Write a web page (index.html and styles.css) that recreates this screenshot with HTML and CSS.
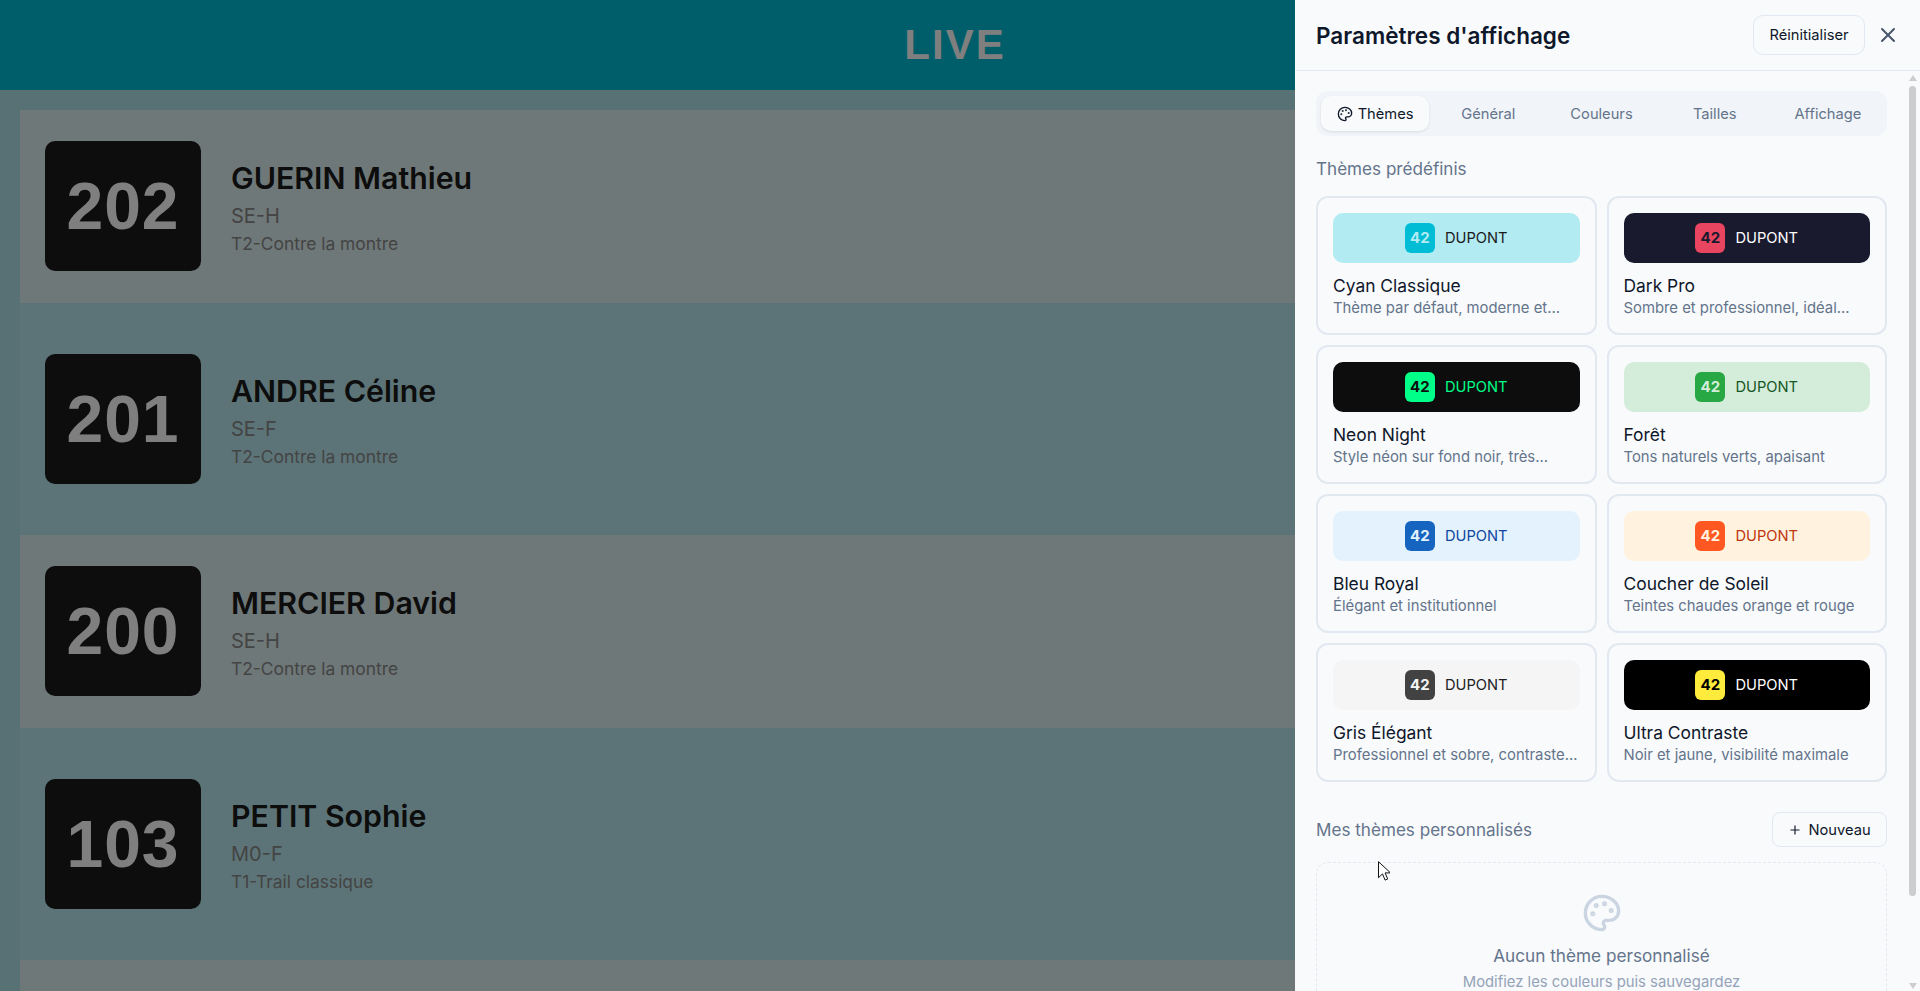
FILE: index.html
```html
<!DOCTYPE html>
<html lang="fr">
<head>
  <meta charset="UTF-8" />
  <meta name="viewport" content="width=device-width, initial-scale=1.0"/>
  <title>Live</title>
  <link rel="stylesheet" href="styles.css">
</head>
<body>

<header class="top-bar">LIVE</header>

<main class="runners">
  <div class="runner">
    <div class="bib">202</div>
    <div class="runner-info">
      <div class="runner-name">GUERIN Mathieu</div>
      <div class="runner-cat">SE-H</div>
      <div class="runner-race">T2-Contre la montre</div>
    </div>
  </div>
  <div class="runner">
    <div class="bib">201</div>
    <div class="runner-info">
      <div class="runner-name">ANDRE Céline</div>
      <div class="runner-cat">SE-F</div>
      <div class="runner-race">T2-Contre la montre</div>
    </div>
  </div>
  <div class="runner">
    <div class="bib">200</div>
    <div class="runner-info">
      <div class="runner-name">MERCIER David</div>
      <div class="runner-cat">SE-H</div>
      <div class="runner-race">T2-Contre la montre</div>
    </div>
  </div>
  <div class="runner">
    <div class="bib">103</div>
    <div class="runner-info">
      <div class="runner-name">PETIT Sophie</div>
      <div class="runner-cat">M0-F</div>
      <div class="runner-race">T1-Trail classique</div>
    </div>
  </div>
  <div class="runner"></div>
</main>

<div class="overlay"></div>

<aside class="panel">
  <div class="panel-header">
    <h2 class="panel-title">Paramètres d'affichage</h2>
    <button class="btn btn-reset" type="button">Réinitialiser</button>
    <svg class="close-icon" viewBox="0 0 24 24" fill="none" stroke="currentColor" stroke-width="2" stroke-linecap="round">
      <path d="M18 6 6 18M6 6l12 12"/>
    </svg>
  </div>

  <div class="panel-main">
    <div class="panel-body">
      <nav class="tabs">
        <div class="tab active">
          <svg class="tab-icon" viewBox="0 0 24 24" fill="none" stroke="currentColor" stroke-width="2" stroke-linecap="round" stroke-linejoin="round">
            <path d="M12 2C6.5 2 2 6.5 2 12s4.5 10 10 10c.926 0 1.648-.746 1.648-1.688 0-.437-.18-.835-.437-1.125-.29-.289-.438-.652-.438-1.125a1.64 1.64 0 0 1 1.668-1.668h1.996c3.051 0 5.555-2.503 5.555-5.554C21.965 6.012 17.461 2 12 2z"/>
            <circle cx="13.5" cy="6.5" r=".5" fill="currentColor"/>
            <circle cx="17.5" cy="10.5" r=".5" fill="currentColor"/>
            <circle cx="8.5" cy="7.5" r=".5" fill="currentColor"/>
            <circle cx="6.5" cy="12.5" r=".5" fill="currentColor"/>
          </svg>
          Thèmes
        </div>
        <div class="tab">Général</div>
        <div class="tab">Couleurs</div>
        <div class="tab">Tailles</div>
        <div class="tab">Affichage</div>
      </nav>

      <h3 class="section-title">Thèmes prédéfinis</h3>

      <div class="theme-grid">
        <div class="theme-card">
          <div class="preview cyan"><span class="preview-num">42</span><span class="preview-name">DUPONT</span></div>
          <div class="theme-name">Cyan Classique</div>
          <div class="theme-desc">Thème par défaut, moderne et...</div>
        </div>
        <div class="theme-card">
          <div class="preview dark"><span class="preview-num">42</span><span class="preview-name">DUPONT</span></div>
          <div class="theme-name">Dark Pro</div>
          <div class="theme-desc">Sombre et professionnel, idéal...</div>
        </div>
        <div class="theme-card">
          <div class="preview neon"><span class="preview-num">42</span><span class="preview-name">DUPONT</span></div>
          <div class="theme-name">Neon Night</div>
          <div class="theme-desc">Style néon sur fond noir, très...</div>
        </div>
        <div class="theme-card">
          <div class="preview forest"><span class="preview-num">42</span><span class="preview-name">DUPONT</span></div>
          <div class="theme-name">Forêt</div>
          <div class="theme-desc">Tons naturels verts, apaisant</div>
        </div>
        <div class="theme-card">
          <div class="preview royal"><span class="preview-num">42</span><span class="preview-name">DUPONT</span></div>
          <div class="theme-name">Bleu Royal</div>
          <div class="theme-desc">Élégant et institutionnel</div>
        </div>
        <div class="theme-card">
          <div class="preview sunset"><span class="preview-num">42</span><span class="preview-name">DUPONT</span></div>
          <div class="theme-name">Coucher de Soleil</div>
          <div class="theme-desc">Teintes chaudes orange et rouge</div>
        </div>
        <div class="theme-card">
          <div class="preview grey"><span class="preview-num">42</span><span class="preview-name">DUPONT</span></div>
          <div class="theme-name">Gris Élégant</div>
          <div class="theme-desc">Professionnel et sobre, contraste...</div>
        </div>
        <div class="theme-card">
          <div class="preview ultra"><span class="preview-num">42</span><span class="preview-name">DUPONT</span></div>
          <div class="theme-name">Ultra Contraste</div>
          <div class="theme-desc">Noir et jaune, visibilité maximale</div>
        </div>
      </div>

      <div class="custom-head">
        <h3 class="section-title custom-title">Mes thèmes personnalisés</h3>
        <button class="btn btn-new" type="button">
          <svg class="plus-icon" viewBox="0 0 24 24" fill="none" stroke="currentColor" stroke-width="2" stroke-linecap="round">
            <path d="M5 12h14M12 5v14"/>
          </svg>
          Nouveau
        </button>
      </div>

      <div class="empty-box">
        <svg class="empty-icon" viewBox="0 0 24 24" fill="none" stroke="currentColor" stroke-width="2" stroke-linecap="round" stroke-linejoin="round">
          <path d="M12 2C6.5 2 2 6.5 2 12s4.5 10 10 10c.926 0 1.648-.746 1.648-1.688 0-.437-.18-.835-.437-1.125-.29-.289-.438-.652-.438-1.125a1.64 1.64 0 0 1 1.668-1.668h1.996c3.051 0 5.555-2.503 5.555-5.554C21.965 6.012 17.461 2 12 2z"/>
          <circle cx="13.5" cy="6.5" r=".5" fill="currentColor"/>
          <circle cx="17.5" cy="10.5" r=".5" fill="currentColor"/>
          <circle cx="8.5" cy="7.5" r=".5" fill="currentColor"/>
          <circle cx="6.5" cy="12.5" r=".5" fill="currentColor"/>
        </svg>
        <div class="empty-title">Aucun thème personnalisé</div>
        <div class="empty-text">Modifiez les couleurs puis sauvegardez</div>
      </div>
    </div>

    <div class="scrollbar">
      <div class="arrow-up"></div>
      <div class="thumb"></div>
      <div class="arrow-down"></div>
    </div>
  </div>
</aside>

<svg class="cursor" viewBox="0 0 12 20">
  <path d="M.5.7v16l4-3.8 2.6 6.2 2.6-1.1-2.6-6.1h5.4z" fill="#fff" stroke="#111" stroke-width="1"/>
</svg>

</body>
</html>
```

FILE: styles.css
```css
* {
  box-sizing: border-box;
}

html, body {
  height: 100%;
}

body {
  margin: 0;
  font-family: Inter, "Liberation Sans", sans-serif;
  overflow: hidden;
  background: #b0e2ea;
}

.top-bar {
  height: 90px;
  width: 1905px;
  padding-left: 5px;
  display: flex;
  align-items: center;
  justify-content: center;
  background: #00bcd4;
  color: #fff;
  font-family: "Liberation Sans", Arial, sans-serif;
  font-size: 42px;
  font-weight: bold;
  letter-spacing: 2px;
}

.runners {
  display: flex;
  flex-direction: column;
  gap: 20px;
  padding: 20px;
  width: 1905px;
}

.runner {
  display: flex;
  align-items: center;
  gap: 30px;
  height: 192.5px;
  padding: 0 25px;
  flex-shrink: 0;
}

.runner:nth-child(odd) {
  background: #dff0f2;
}

/* even rows fill the gap up to their neighbours */
.runner:nth-child(even) {
  height: 232.5px;
  margin: -20px 0;
  background: #b8e8ee;
}

.bib {
  width: 156px;
  height: 130px;
  display: flex;
  align-items: center;
  justify-content: center;
  background: #1a1a1a;
  color: #fff;
  border-radius: 10px;
  font-family: "Liberation Sans", Arial, sans-serif;
  font-size: 66px;
  font-weight: bold;
  letter-spacing: 1px;
}

.runner-info {
  padding-top: 5px;
}

.runner-name {
  font-size: 30.3px;
  font-weight: 600;
  line-height: 34px;
  color: #1a1a1a;
}

.runner-cat {
  margin-top: 8px;
  font-size: 20px;
  line-height: 26px;
  color: #888;
}

.runner-race {
  margin-top: 3px;
  font-size: 17.4px;
  line-height: 24px;
  color: #888;
}

.overlay {
  position: fixed;
  inset: 0;
  background: rgba(0, 0, 0, 0.5);
}

.panel {
  position: fixed;
  top: 0;
  right: 0;
  bottom: 0;
  width: 625px;
  display: flex;
  flex-direction: column;
  background: #f8fafc;
  border-left: 1px solid #f8fafc;
  color: #0f172a;
}

.panel-header {
  height: 71px;
  flex-shrink: 0;
  display: flex;
  align-items: center;
  padding: 0 20px;
  border-bottom: 1px solid #e2e8f0;
}

.panel-title {
  margin: 0 auto 0 0;
  font-size: 22.5px;
  font-weight: 600;
}

.btn {
  display: flex;
  align-items: center;
  justify-content: center;
  background: transparent;
  border: 1px solid #e2e8f0;
  color: #0f172a;
  font-family: inherit;
  font-size: 14.7px;
  font-weight: 400;
}

.btn-reset {
  width: 112px;
  height: 40px;
  border-radius: 10px;
  margin-right: 11px;
}

.close-icon {
  width: 24px;
  height: 24px;
  color: #475569;
}

.panel-main {
  flex: 1;
  display: flex;
  min-height: 0;
}

.panel-body {
  flex: 1;
  overflow: hidden;
  padding: 20px 18px 0 20px;
}

.tabs {
  display: flex;
  gap: 5px;
  padding: 5px;
  height: 45px;
  background: #f1f5f9;
  border-radius: 12px;
}

.tab {
  flex: 1;
  display: flex;
  align-items: center;
  justify-content: center;
  gap: 5px;
  border-radius: 10px;
  font-size: 14.7px;
  font-weight: 400;
  color: #64748b;
}

.tab.active {
  background: #f8fafc;
  color: #0f172a;
  box-shadow: 0 1px 3px rgba(0, 0, 0, 0.1);
}

.tab-icon {
  width: 16px;
  height: 16px;
}

.section-title {
  margin: 20px 0 14px;
  font-size: 17.1px;
  font-weight: 400;
  line-height: 26px;
  color: #64748b;
}

.theme-grid {
  display: grid;
  grid-template-columns: 1fr 1fr;
  gap: 10px;
}

.theme-card {
  height: 139px;
  padding: 15px;
  border: 2px solid #e2e8f0;
  border-radius: 12px;
}

.preview {
  height: 50px;
  display: flex;
  align-items: center;
  justify-content: center;
  gap: 10px;
  margin-bottom: 12px;
  border-radius: 10px;
}

.preview-num {
  width: 30px;
  height: 30px;
  display: flex;
  align-items: center;
  justify-content: center;
  padding-bottom: 1px;
  border-radius: 6px;
  font-size: 15px;
  font-weight: 700;
}

.preview-name {
  padding-bottom: 1px;
  font-size: 14.7px;
  font-weight: 400;
}

.cyan { background: #b2ebf2; color: #1a1a1a; }
.cyan .preview-num { background: #00bcd4; color: #b2ebf2; }
.dark { background: #1a1a2e; color: #fff; }
.dark .preview-num { background: #e94560; color: #1a1a2e; }
.neon { background: #0d0d0d; color: #00ff88; }
.neon .preview-num { background: #00ff88; color: #0d0d0d; }
.forest { background: #d4edda; color: #155724; }
.forest .preview-num { background: #28a745; color: #d4edda; }
.royal { background: #e3f2fd; color: #0d47a1; }
.royal .preview-num { background: #1565c0; color: #e3f2fd; }
.sunset { background: #fff3e0; color: #bf360c; }
.sunset .preview-num { background: #ff5722; color: #fff3e0; }
.grey { background: #f5f5f5; color: #212121; }
.grey .preview-num { background: #424242; color: #f5f5f5; }
.ultra { background: #000; color: #fff; }
.ultra .preview-num { background: #ffeb3b; color: #000; }

.theme-name {
  font-size: 17.4px;
  font-weight: 400;
  line-height: 22px;
  color: #0f172a;
}

.theme-desc {
  margin-top: 1px;
  font-size: 14.85px;
  line-height: 20px;
  white-space: nowrap;
  color: #64748b;
}

.custom-head {
  display: flex;
  align-items: center;
  justify-content: space-between;
  margin-top: 30px;
}

.custom-title {
  margin: 0;
}

.btn-new {
  width: 115px;
  height: 35px;
  gap: 6px;
  border-radius: 8px;
}

.plus-icon {
  width: 14px;
  height: 14px;
}

.empty-box {
  height: 200px;
  margin-top: 15px;
  padding-top: 30px;
  display: flex;
  flex-direction: column;
  align-items: center;
  border: 1px dashed #e2e8f0;
  border-radius: 12px;
}

.empty-icon {
  width: 40px;
  height: 40px;
  color: #cbd5e1;
}

.empty-title {
  margin-top: 10px;
  font-size: 17.2px;
  font-weight: 400;
  line-height: 26px;
  color: #64748b;
}

.empty-text {
  margin-top: 3px;
  font-size: 14.85px;
  line-height: 20px;
  color: #94a3b8;
}

.scrollbar {
  width: 15px;
  flex-shrink: 0;
  display: flex;
  flex-direction: column;
  align-items: center;
  padding: 4px 0 2px;
}

.arrow-up,
.arrow-down {
  width: 0;
  height: 0;
  border-left: 4px solid transparent;
  border-right: 4px solid transparent;
}

.arrow-up {
  border-bottom: 6px solid #cdcdcd;
}

.arrow-down {
  margin-top: auto;
  border-top: 6px solid #cdcdcd;
}

.thumb {
  width: 7px;
  height: 810px;
  margin-top: 5px;
  background: #cdcdcd;
  border-radius: 4px;
}

.cursor {
  position: fixed;
  left: 1378px;
  top: 861px;
  width: 12px;
  height: 20px;
}
```
